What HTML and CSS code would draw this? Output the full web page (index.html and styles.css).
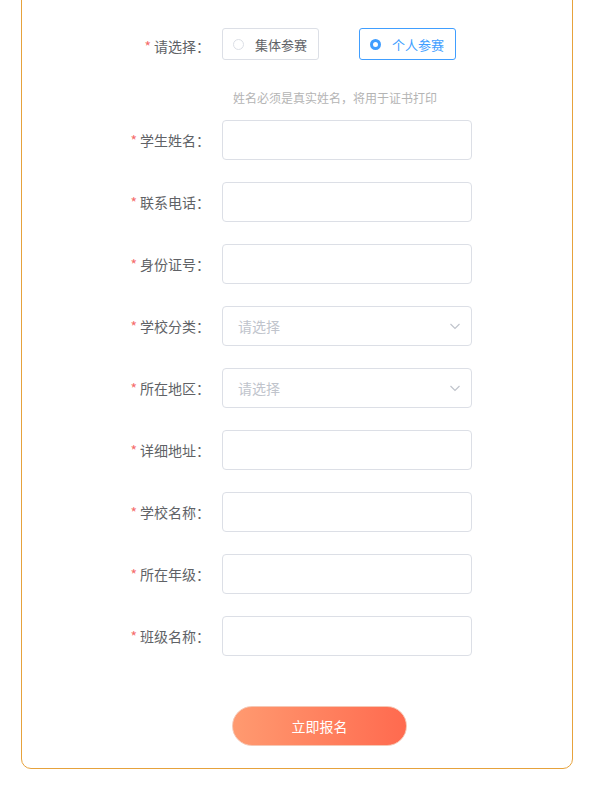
FILE: index.html
```html
<!DOCTYPE html>
<html lang="zh-CN">
<head>
    <meta charset="UTF-8">
    <meta name="viewport" content="width=device-width, initial-scale=1.0">
    <title>报名</title>
    <link rel="stylesheet" href="styles.css">
</head>
<body>
    <div class="card">
        <form class="signup-form">
            <div class="form-row radio-row">
                <label class="form-label"><span class="req">*</span>请选择：</label>
                <div class="radio-group">
                    <span class="radio-box">
                        <span class="radio-dot"></span>
                        <span class="radio-text">集体参赛</span>
                    </span>
                    <span class="radio-box checked">
                        <span class="radio-dot"></span>
                        <span class="radio-text">个人参赛</span>
                    </span>
                </div>
            </div>

            <div class="form-hint">姓名必须是真实姓名，将用于证书打印</div>

            <div class="form-row">
                <label class="form-label"><span class="req">*</span>学生姓名：</label>
                <input class="text-input" type="text">
            </div>
            <div class="form-row">
                <label class="form-label"><span class="req">*</span>联系电话：</label>
                <input class="text-input" type="text">
            </div>
            <div class="form-row">
                <label class="form-label"><span class="req">*</span>身份证号：</label>
                <input class="text-input" type="text">
            </div>
            <div class="form-row">
                <label class="form-label"><span class="req">*</span>学校分类：</label>
                <div class="select-box">
                    <span class="placeholder">请选择</span>
                    <svg class="arrow" width="12" height="12" viewBox="0 0 12 12"><path d="M1.5 4 L6 8.5 L10.5 4" fill="none" stroke="#c0c4cc" stroke-width="1.2"/></svg>
                </div>
            </div>
            <div class="form-row">
                <label class="form-label"><span class="req">*</span>所在地区：</label>
                <div class="select-box">
                    <span class="placeholder">请选择</span>
                    <svg class="arrow" width="12" height="12" viewBox="0 0 12 12"><path d="M1.5 4 L6 8.5 L10.5 4" fill="none" stroke="#c0c4cc" stroke-width="1.2"/></svg>
                </div>
            </div>
            <div class="form-row">
                <label class="form-label"><span class="req">*</span>详细地址：</label>
                <input class="text-input" type="text">
            </div>
            <div class="form-row">
                <label class="form-label"><span class="req">*</span>学校名称：</label>
                <input class="text-input" type="text">
            </div>
            <div class="form-row">
                <label class="form-label"><span class="req">*</span>所在年级：</label>
                <input class="text-input" type="text">
            </div>
            <div class="form-row">
                <label class="form-label"><span class="req">*</span>班级名称：</label>
                <input class="text-input" type="text">
            </div>

            <div class="submit-row">
                <button type="button" class="submit-btn">立即报名</button>
            </div>
        </form>
    </div>
</body>
</html>
```

FILE: styles.css
```css
body {
    margin: 0;
    background: #fff;
    font-family: "Noto Sans CJK SC", "Microsoft YaHei", sans-serif;
    color: #606266;
}

.card {
    margin: -12px 20px 0 21px;
    border: 1px solid #e6a23c;
    border-radius: 10px;
    padding: 39px 0 22px;
}

.form-row {
    display: grid;
    grid-template-columns: 200px 250px;
    align-items: center;
    margin-bottom: 22px;
}

.form-label {
    text-align: right;
    padding-right: 12px;
    font-size: 14px;
    color: #606266;
}

.req {
    color: #f56c6c;
    margin-right: 3px;
}

.radio-row {
    margin-bottom: 29px;
}

.radio-row .form-label {
    padding-top: 3px;
}

.radio-group {
    display: flex;
    gap: 40px;
}

.radio-box {
    box-sizing: border-box;
    display: flex;
    align-items: center;
    flex-shrink: 0;
    width: 97px;
    height: 32px;
    padding-left: 10px;
    border: 1px solid #dcdfe6;
    border-radius: 3px;
    font-size: 13px;
    color: #606266;
}

.radio-dot {
    box-sizing: border-box;
    width: 11px;
    height: 11px;
    border: 1px solid #dcdfe6;
    border-radius: 50%;
    margin-right: 11px;
}

.radio-box.checked {
    border-color: #409eff;
    color: #409eff;
}

.radio-box.checked .radio-dot {
    border: 3px solid #409eff;
    background: #fff;
}

.form-hint {
    margin: 0 0 13px 211px;
    font-size: 12px;
    line-height: 18px;
    color: #b4b4b4;
}

.text-input,
.select-box {
    box-sizing: border-box;
    width: 250px;
    height: 40px;
    border: 1px solid #dcdfe6;
    border-radius: 4px;
    background: #fff;
    font: inherit;
    outline: none;
}

.select-box {
    display: flex;
    align-items: center;
    justify-content: space-between;
    padding: 0 10px 0 15px;
    font-size: 14px;
}

.placeholder {
    color: #c0c4cc;
}

.submit-row {
    padding: 28px 0 0 210px;
}

.submit-btn {
    width: 175px;
    height: 40px;
    border: 1px solid #f6c7b4;
    border-radius: 20px;
    background: linear-gradient(to right, #ff9a70, #ff6a4f);
    color: #fff;
    font-family: inherit;
    font-size: 14px;
    cursor: pointer;
}
```
